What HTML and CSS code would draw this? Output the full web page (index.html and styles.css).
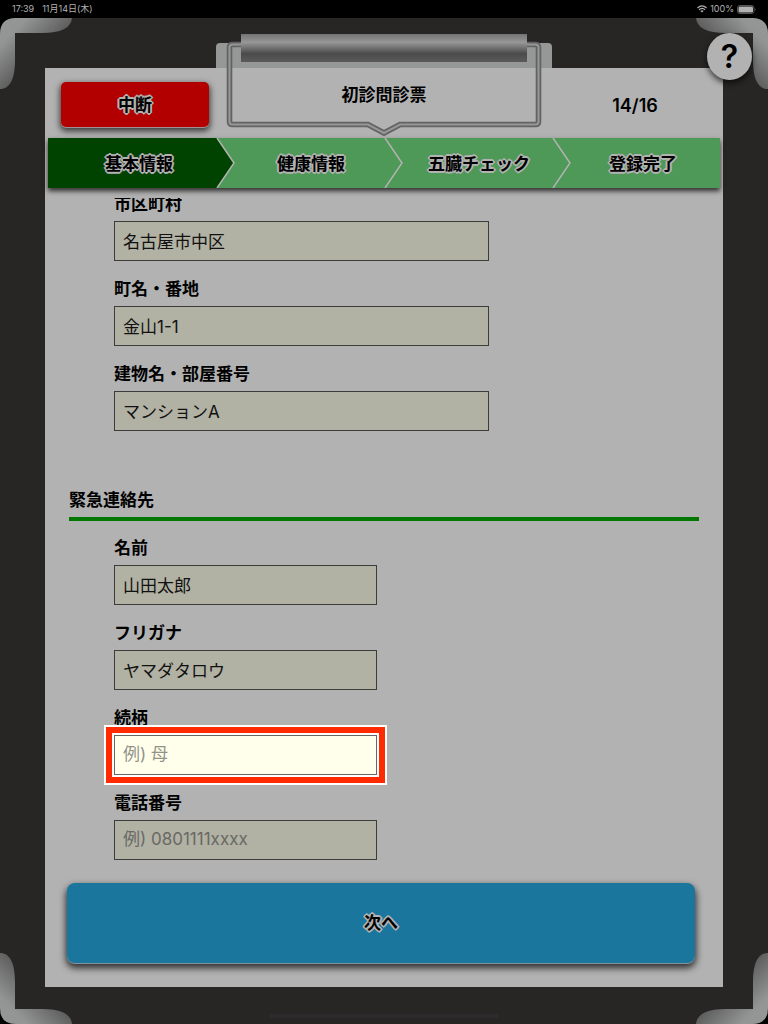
FILE: index.html
```html
<!DOCTYPE html>
<html lang="ja">
<head>
<meta charset="utf-8">
<meta name="viewport" content="width=device-width, initial-scale=1">
<title>初診問診票</title>
<link rel="stylesheet" href="styles.css">
</head>
<body>
<div class="status">
  <span>17:39</span>
  <span>11月14日(木)</span>
  <div class="status-right">
    <svg class="wifi" width="10" height="8" viewBox="0 0 20 16" fill="none" stroke="currentColor" stroke-width="2.6" aria-hidden="true">
      <path d="M1 6Q10-2.500 19 6M4.200 9.600Q10 4 15.800 9.600"/>
      <path d="M10 15L6.800 11.800Q10 9 13.200 11.800Z" fill="currentColor" stroke="none"/>
    </svg>
    <span>100%</span>
    <svg class="battery" width="20" height="9" viewBox="0 0 20 9" aria-hidden="true">
      <rect x=".5" y=".5" width="16.500" height="8" rx="2.200" fill="none" stroke="#555"/>
      <rect x="1.500" y="1.500" width="14.500" height="6" rx="1.300" fill="currentColor"/>
      <path d="M18 3Q19.500 4.500 18 6Z" fill="#555"/>
    </svg>
  </div>
</div>

<div class="board">
  <svg width="0" height="0" class="defs" aria-hidden="true">
    <defs>
      <linearGradient id="metal" gradientUnits="userSpaceOnUse" x1="0" y1="0" x2="46" y2="46">
        <stop offset="0" stop-color="#959896"/>
        <stop offset=".3" stop-color="#929593"/>
        <stop offset=".85" stop-color="#5c5c5c"/>
      </linearGradient>
      <g id="corner">
        <path d="M0 0H16Q0 0 0 16Z" fill="#000"/>
        <path d="M16 0H72C71 10 61 15 42 15H15V42C15 61 10 71 0 71V16Q0 0 16 0Z" fill="url(#metal)"/>
      </g>
    </defs>
  </svg>
  <svg class="corner top left" viewBox="0 0 72 72" aria-hidden="true"><use href="#corner"/></svg>
  <svg class="corner top right" viewBox="0 0 72 72" aria-hidden="true"><use href="#corner" transform="matrix(-1 0 0 1 72 0)"/></svg>
  <svg class="corner bottom left" viewBox="0 0 72 72" aria-hidden="true"><use href="#corner" transform="matrix(1 0 0 -1 0 72)"/></svg>
  <svg class="corner bottom right" viewBox="0 0 72 72" aria-hidden="true"><use href="#corner" transform="matrix(-1 0 0 -1 72 72)"/></svg>

  <main class="paper">
    <header class="head">
      <button type="button" class="stop outlined">中断</button>
      <div class="title">
        <svg class="clip" width="338" height="104" viewBox="0 0 338 104" aria-hidden="true">
          <defs>
            <linearGradient id="bar" x1="0" y1="0" x2="0" y2="1">
              <stop offset="0" stop-color="#747474"/>
              <stop offset=".3" stop-color="#979797"/>
              <stop offset=".7" stop-color="#4b4b4b"/>
              <stop offset="1" stop-color="#5a5a5a"/>
            </linearGradient>
          </defs>
          <path d="M1 34V13Q1 9 5 9H333Q337 9 337 13V34Z" fill="#959896"/>
          <path d="M17.500 10.500H320.500Q323.500 10.500 323.500 13.500V87.500Q323.500 90.500 320.500 90.500H185L169 99L153 90.500H17.500Q14.500 90.500 14.500 87.500V13.500Q14.500 10.500 17.500 10.500Z" fill="none" stroke="#636363" stroke-width="5.600"/>
          <path d="M17.500 10.500H320.500Q323.500 10.500 323.500 13.500V87.500Q323.500 90.500 320.500 90.500H185L169 99L153 90.500H17.500Q14.500 90.500 14.500 87.500V13.500Q14.500 10.500 17.500 10.500Z" fill="none" stroke="#959796" stroke-width="2"/>
          <rect x="26" y="0" width="286" height="28" fill="url(#bar)"/>
        </svg>
        <h1>初診問診票</h1>
      </div>
      <p class="count">14/16</p>
    </header>

    <ol class="steps">
      <li class="step current"><span class="outlined">基本情報</span><svg class="arrow" viewBox="0 0 19 50" preserveAspectRatio="none" aria-hidden="true"><path d="M0 0H1L18 25L1 50H0Z" fill="#004200"/><path d="M1 0L18 25L1 50" fill="none" stroke="#b2b2b2" stroke-width="1.500"/></svg></li>
      <li class="step"><span class="outlined">健康情報</span><svg class="arrow" viewBox="0 0 19 50" preserveAspectRatio="none" aria-hidden="true"><path d="M1 0L18 25L1 50" fill="none" stroke="#b2b2b2" stroke-width="1.500"/></svg></li>
      <li class="step"><span class="outlined">五臓チェック</span><svg class="arrow" viewBox="0 0 19 50" preserveAspectRatio="none" aria-hidden="true"><path d="M1 0L18 25L1 50" fill="none" stroke="#b2b2b2" stroke-width="1.500"/></svg></li>
      <li class="step"><span class="outlined">登録完了</span></li>
    </ol>

    <form class="form">
      <div class="fields address">
        <div class="field"><label for="city">市区町村</label><input class="wide" id="city" type="text" value="名古屋市中区"></div>
        <div class="field"><label for="street">町名・番地</label><input class="wide" id="street" type="text" value="金山1-1"></div>
        <div class="field"><label for="building">建物名・部屋番号</label><input class="wide" id="building" type="text" value="マンションA"></div>
      </div>
      <h2>緊急連絡先</h2>
      <div class="fields">
        <div class="field"><label for="name">名前</label><input id="name" type="text" value="山田太郎"></div>
        <div class="field"><label for="kana">フリガナ</label><input id="kana" type="text" value="ヤマダタロウ"></div>
        <div class="field"><label for="relation">続柄</label><input class="highlight" id="relation" type="text" placeholder="例) 母"></div>
        <div class="field"><label for="phone">電話番号</label><input id="phone" type="tel" placeholder="例) 0801111xxxx"></div>
      </div>
    </form>
    <button type="button" class="next outlined">次へ</button>
  </main>

  <button type="button" class="help" aria-label="ヘルプ">?</button>
  <div class="home-bar"></div>
</div>
</body>
</html>
```

FILE: styles.css
```css
* {
  box-sizing: border-box;
}

body {
  margin: 0;
  min-height: 100vh;
  display: flex;
  flex-direction: column;
  background: #000;
  color: #000;
  font: 17px/24px Inter, "Noto Sans CJK JP", sans-serif;
}

button,
input {
  font: inherit;
  color: inherit;
}

h1,
h2,
p,
ol {
  margin: 0;
  padding: 0;
}

.status {
  display: flex;
  align-items: center;
  gap: 8px;
  height: 18px;
  padding: 0 11px 0 12px;
  color: #b2b2b2;
  font-size: 9px;
  line-height: 18px;
}

.status-right {
  display: flex;
  align-items: center;
  gap: 3px;
  margin-left: auto;
}

.board {
  position: relative;
  flex: 1;
  display: flex;
  padding: 50px 45px 37px;
  background: #272624;
}

.defs {
  position: absolute;
}

.corner {
  position: absolute;
  width: 72px;
  height: 72px;
}

.top { top: 0; }
.bottom { bottom: 0; }
.left { left: 0; }
.right { right: 0; }

.paper {
  flex: 1;
  min-width: 0;
  display: flex;
  flex-direction: column;
  padding-bottom: 24px;
  background: #b2b2b2;
}

.head {
  display: grid;
  grid-template-columns: 1fr 314px 1fr;
  height: 70px;
}

.stop {
  margin: 14px 18px 11px 16px;
  padding: 0;
  border: 0;
  border-radius: 5px;
  background: #b20000;
  font-weight: 700;
  box-shadow: 0 1px 0 #a09090, 0 3px 6px 1px rgba(0, 0, 0, 0.7);
}

.outlined {
  text-shadow: 2px 0 #b2b2b2, -2px 0 #b2b2b2, 0 2px #b2b2b2, 0 -2px #b2b2b2,
    1px 1px #b2b2b2, -1px 1px #b2b2b2, 1px -1px #b2b2b2, -1px -1px #b2b2b2,
    0 0 2px #b2b2b2;
}

.title {
  position: relative;
  padding-top: 15px;
  text-align: center;
}

.clip {
  position: absolute;
  left: -12px;
  top: -34px;
}

h1 {
  position: relative;
  font-size: 17px;
  line-height: 24px;
  font-weight: 700;
}

.count {
  padding: 26px 0 0 6px;
  text-align: center;
  font-size: 18px;
  font-weight: 600;
}

.steps {
  display: grid;
  grid-template-columns: repeat(4, 1fr);
  height: 50px;
  margin: 0 3px 10px;
  list-style: none;
  background: #4e9957;
  box-shadow: 0 3px 5px rgba(0, 0, 0, 0.75);
}

.step {
  position: relative;
  display: flex;
  align-items: center;
  justify-content: center;
  padding: 2px 0 0 22px;
  font-weight: 700;
}

.step:first-child,
.step:last-child {
  padding-left: 14px;
}

.current {
  background: #004200;
}

.arrow {
  position: absolute;
  left: 100%;
  top: 0;
  width: 19px;
  height: 100%;
}

.form {
  flex: 1;
  padding: 0 24px;
  overflow: hidden;
}

.fields {
  display: flex;
  flex-direction: column;
  gap: 16px;
  padding-left: 45px;
}

.address {
  margin-top: -6px;
}

.field {
  display: flex;
  flex-direction: column;
  gap: 5px;
}

label,
h2 {
  font-size: 17px;
  line-height: 24px;
  font-weight: 700;
}

input {
  width: 263px;
  max-width: 100%;
  height: 40px;
  padding: 0 8px 2px;
  border: 1px solid #3c3c3a;
  border-radius: 0;
  background: #b1b1a4;
  color: #111;
}

.wide {
  width: 375px;
}

input::placeholder {
  color: #696964;
  opacity: 1;
}

.highlight {
  background: #ffffeb;
  border-color: #666;
  box-shadow: 0 0 0 2px #fff, 0 0 0 8px #ff2a00, 0 0 0 10px #fff;
}

.highlight::placeholder {
  color: #929289;
}

h2 {
  margin: 57px 0 15px;
  padding-bottom: 5px;
  border-bottom: 4px solid #007800;
}

.next {
  height: 80px;
  margin: 0 28px 0 22px;
  border: 0;
  border-radius: 8px;
  background: #1b769e;
  font-weight: 700;
  box-shadow: 0 1px 0 #8293a0, 0 4px 7px 1px rgba(0, 0, 0, 0.75);
}

.help {
  position: absolute;
  top: 15px;
  right: 16px;
  width: 45px;
  height: 47px;
  padding: 0;
  border: 0;
  border-radius: 50%;
  background: #b2b2b2;
  font-size: 32px;
  line-height: 47px;
  font-weight: 600;
  box-shadow: 0 3px 6px rgba(0, 0, 0, 0.7);
}

.home-bar {
  position: absolute;
  left: 35%;
  right: 35%;
  bottom: 6px;
  height: 4px;
  border-radius: 2px;
  background: #2d2b2d;
}
```
